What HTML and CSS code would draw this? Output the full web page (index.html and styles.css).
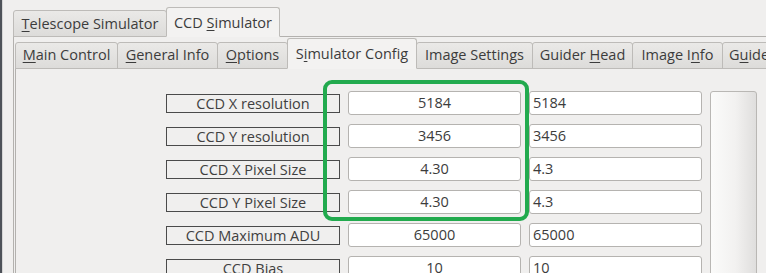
FILE: index.html
```html
<!DOCTYPE html>
<html>
<head>
<meta charset="utf-8">
<link rel="stylesheet" href="styles.css">
</head>
<body>
<div class="screen">
  <div class="edge"></div>
  <div class="main">
    <div class="tabs outer-tabs">
      <div class="tab tab-out w-tele"><span class="t"><span class="u">T</span>elescope Simulator</span></div>
      <div class="tab tab-out active w-ccd"><span class="t">CCD <span class="u">S</span>imulator</span></div>
    </div>
    <div class="pane outer-pane">
      <div class="tabs inner-tabs">
        <div class="tab tab-in w-main"><span class="t"><span class="u">M</span>ain Control</span></div>
        <div class="tab tab-in w-gen"><span class="t"><span class="u">G</span>eneral Info</span></div>
        <div class="tab tab-in w-opt"><span class="t"><span class="u">O</span>ptions</span></div>
        <div class="tab tab-in active w-sim"><span class="t">S<span class="u">i</span>mulator Config</span></div>
        <div class="tab tab-in w-img"><span class="t">Image Settings</span></div>
        <div class="tab tab-in w-gh"><span class="t">Guider <span class="u">H</span>ead</span></div>
        <div class="tab tab-in w-ii"><span class="t">Image I<span class="u">n</span>fo</span></div>
        <div class="tab tab-in w-gd"><span class="t">G<span class="u">u</span>ider</span></div>
      </div>
      <div class="pane inner-pane">
        <div class="config">
          <div class="label">CCD X resolution</div>
          <div class="field center">5184</div>
          <div class="field left">5184</div>
          <div class="spin"></div>

          <div class="label">CCD Y resolution</div>
          <div class="field center">3456</div>
          <div class="field left">3456</div>

          <div class="label">CCD X Pixel Size</div>
          <div class="field center">4.30</div>
          <div class="field left">4.3</div>

          <div class="label">CCD Y Pixel Size</div>
          <div class="field center">4.30</div>
          <div class="field left">4.3</div>

          <div class="label">CCD Maximum ADU</div>
          <div class="field center">65000</div>
          <div class="field left">65000</div>

          <div class="label">CCD Bias</div>
          <div class="field center">10</div>
          <div class="field left">10</div>

          <div class="highlight"></div>
        </div>
      </div>
    </div>
  </div>
</div>
</body>
</html>
```
FILE: styles.css
```css
html, body {
  margin: 0;
  padding: 0;
  width: 766px;
  height: 273px;
  overflow: hidden;
  background: #f0efee;
}
body {
  font-family: "Open Sans", "Noto Sans", sans-serif;
  font-size: 14.5px;
  color: #3c3c3c;
}
.screen {
  display: flex;
  height: 273px;
}
.edge {
  width: 2px;
  flex: none;
  background: #4e5259;
  border-right: 1px solid #d6d6d6;
}
.main {
  flex: 1;
  margin-left: 10px;
  padding-top: 7px;
  min-width: 0;
}
.tabs {
  display: flex;
  align-items: flex-end;
  position: relative;
  z-index: 1;
  margin-bottom: -1px;
  white-space: nowrap;
}
.tab {
  flex: none;
  box-sizing: border-box;
  display: flex;
  align-items: center;
  justify-content: center;
  border: 1px solid #bdbbb8;
  border-radius: 3px 3px 0 0;
  background: linear-gradient(#eae9e7, #dddcda);
  overflow: hidden;
}
.t { white-space: pre; }
.tab + .tab { margin-left: -1px; }
.tab.active {
  background: #f3f2f1;
  border-bottom-color: #f3f2f1;
  position: relative;
  z-index: 2;
}
.tab-out { height: 27px; padding-bottom: 1px; }
.tab-out.active { height: 30px; padding-bottom: 0; }
.tab-in { height: 27px; padding-bottom: 2px; }
.tab-in.active { height: 31px; padding-bottom: 0; }
.u { text-decoration: underline; text-underline-offset: 2px; }

.w-tele { width: 154px; }
.w-ccd { width: 114px; }
.w-main { width: 103px; }
.w-gen { width: 101px; }
.w-opt { width: 71px; }
.w-sim { width: 130px; }
.w-img { width: 117px; }
.w-gh { width: 101px; }
.w-ii { width: 91px; }
.w-gd { width: 80px; justify-content: flex-start; padding-left: 6px; }

.pane {
  border-left: 1px solid #b3b1ae;
  border-top: 1px solid #b3b1ae;
  background: #f0efee;
}
.outer-pane {
  padding-left: 1px;
  padding-top: 1px;
  height: 240px;
}
.inner-pane {
  height: 220px;
}
.config {
  position: relative;
  display: grid;
  grid-template-columns: 174px 173px 173px 47px;
  grid-auto-rows: 24px;
  column-gap: 8px;
  row-gap: 9px;
  padding-left: 150px;
  padding-top: 22px;
}
.label {
  grid-column: 1;
  align-self: center;
  height: 19px;
  box-sizing: border-box;
  border: 1px solid #4a4a4a;
  display: flex;
  align-items: center;
  justify-content: center;
  line-height: 17px;
  color: #404040;
}
.field {
  box-sizing: border-box;
  background: #ffffff;
  border: 1px solid #b5b3b0;
  border-radius: 3px;
  display: flex;
  align-items: center;
  line-height: 22px;
  color: #3c3c3c;
}
.field.center { justify-content: center; }
.field.left { padding-left: 3px; }
.spin {
  grid-column: 4;
  grid-row: 1 / span 6;
  box-sizing: border-box;
  border: 1px solid #b9b7b4;
  border-radius: 3px;
  background: linear-gradient(90deg, #fbfbfa 0%, #f2f1f0 55%, #dfdedd 100%);
}
.highlight {
  position: absolute;
  left: 307px;
  top: 11px;
  width: 206px;
  height: 141px;
  box-sizing: border-box;
  border: 4px solid #22aa4e;
  border-radius: 9px;
  pointer-events: none;
}
```
